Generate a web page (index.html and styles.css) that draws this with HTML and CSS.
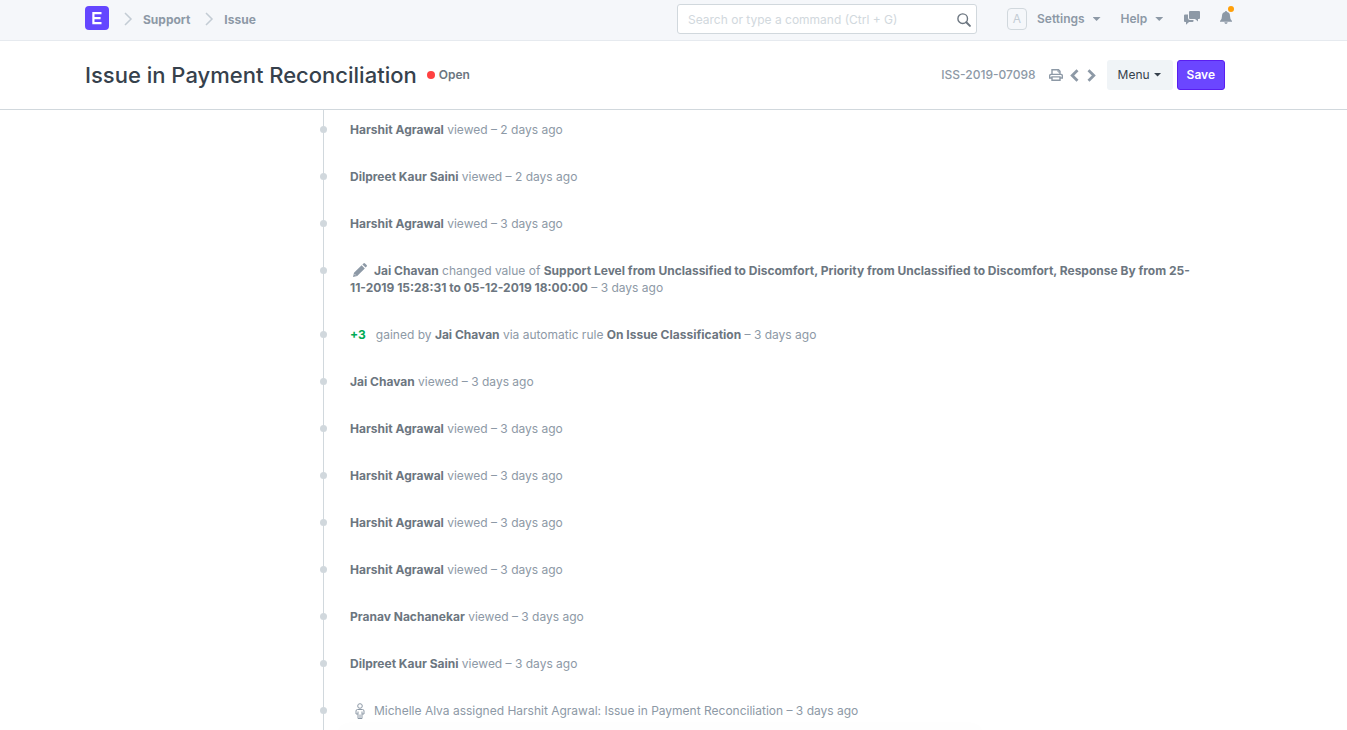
FILE: index.html
```html
<!DOCTYPE html>
<html lang="en">
<head>
<meta charset="utf-8">
<meta name="viewport" content="width=device-width, initial-scale=1">
<title>Issue in Payment Reconciliation</title>
<link rel="stylesheet" href="styles.css">
</head>
<body>
<header class="navbar">
  <div class="container navbar-inner">
    <nav class="breadcrumbs" aria-label="Breadcrumb">
      <a class="logo" href="#" aria-label="Home"><svg width="24" height="24" viewBox="0 0 24 24"><rect width="24" height="24" rx="4" fill="#6446ff"/><path d="M16.5 7.2H8.4v9.9h8.1M8.4 12.1h7.2" fill="none" stroke="#fff" stroke-width="2.2"/></svg></a>
      <svg class="crumb-arrow" width="10" height="14" viewBox="0 0 10 14"><path d="M2 1l6 6-6 6"/></svg>
      <a href="#">Support</a>
      <svg class="crumb-arrow" width="10" height="14" viewBox="0 0 10 14"><path d="M2 1l6 6-6 6"/></svg>
      <a href="#">Issue</a>
    </nav>
    <form class="search">
      <input type="text" aria-label="Search" placeholder="Search or type a command (Ctrl + G)">
      <svg class="search-icon" width="14" height="14" viewBox="0 0 14 14"><circle cx="5.7" cy="5.7" r="4.8" fill="none" stroke="#6c7680" stroke-width="1.4"/><path d="M9.3 9.3l3.6 3.6" stroke="#6c7680" stroke-width="2" stroke-linecap="round"/></svg>
    </form>
    <div class="nav-menu">
      <a class="avatar" href="#">A</a>
      <a class="nav-drop settings" href="#">Settings <span class="caret"></span></a>
      <a class="nav-drop help" href="#">Help <span class="caret"></span></a>
      <a class="chat" href="#" aria-label="Chat"><svg width="16" height="14" viewBox="0 0 16 14"><path d="M6 0h9q1 0 1 1v6q0 1-1 1h-1v2.5L11 8H6q-1 0-1-1V1q0-1 1-1z"/><path d="M1 3.5h3V7q0 2 2 2h3.5v1q0 1-1 1H5l-3 2.8V11H1q-1 0-1-1V4.500q0-1 1-1z"/></svg></a>
      <a class="bell" href="#" aria-label="Notifications"><svg width="12" height="13" viewBox="0 0 12 13"><path d="M6 0q1 0 1.100 1Q10 1.700 10 5q0 3.500 2 5v.8H0V10q2-1.500 2-5 0-3.300 2.900-4Q5 0 6 0zM4.300 11.300h3.400Q7.400 13 6 13t-1.700-1.700z"/></svg><span class="dot"></span></a>
    </div>
  </div>
</header>
<div class="page-head">
  <div class="container head-inner">
    <h1>Issue in Payment Reconciliation</h1>
    <span class="status">Open</span>
    <div class="actions">
      <span class="doc-id">ISS-2019-07098</span>
      <button class="icon-btn print" type="button" aria-label="Print"><svg width="14" height="12" viewBox="0 0 14 12"><path d="M3 6V.7h6.500L11 2.200V6M3 9H.7V6.500Q.7 5.400 1.800 5.400h10.400q1.100 0 1.100 1.100V9H11M3 7.900h8v3.400H3z" fill="none" stroke="#8d99a6" stroke-width="1.400"/><path d="M9 1v2h2" fill="none" stroke="#8d99a6"/></svg></button>
      <button class="icon-btn prev" type="button" aria-label="Previous"><svg width="9" height="13" viewBox="0 0 9 13"><path d="M7.500 1.200L2.200 6.500l5.300 5.300" fill="none" stroke="#8d99a6" stroke-width="2.800"/></svg></button>
      <button class="icon-btn next" type="button" aria-label="Next"><svg width="9" height="13" viewBox="0 0 9 13"><path d="M1.500 1.200l5.300 5.300-5.300 5.300" fill="none" stroke="#8d99a6" stroke-width="2.800"/></svg></button>
      <button class="btn menu-btn" type="button">Menu <span class="caret"></span></button>
      <button class="btn save-btn" type="button">Save</button>
    </div>
  </div>
</div>
<main class="container main">
  <ul class="timeline">
    <li><b>Harshit Agrawal</b> viewed – 2 days ago</li>
    <li><b>Dilpreet Kaur Saini</b> viewed – 2 days ago</li>
    <li><b>Harshit Agrawal</b> viewed – 3 days ago</li>
    <li><svg class="item-icon" width="20" height="14" viewBox="0 0 20 14"><path d="M3 14l1-4.200 7.600-7.600 3.200 3.200L7.200 13zM12.400 1.400l1-1q.8-.8 1.600 0l1.600 1.600q.8.8 0 1.600l-1 1z" fill="#8d99a6"/><path d="M4.600 11.200l1.200 1.200" stroke="#fff" stroke-width=".7"/></svg><b class="after-icon">Jai Chavan</b> changed value of <b>Support Level from Unclassified to Discomfort, Priority from Unclassified to Discomfort, Response By from 25-11-2019 15:28:31 to 05-12-2019 18:00:00</b> – 3 days ago</li>
    <li><b class="points">+3</b>gained by <b>Jai Chavan</b> via automatic rule <b>On Issue Classification</b> – 3 days ago</li>
    <li><b>Jai Chavan</b> viewed – 3 days ago</li>
    <li><b>Harshit Agrawal</b> viewed – 3 days ago</li>
    <li><b>Harshit Agrawal</b> viewed – 3 days ago</li>
    <li><b>Harshit Agrawal</b> viewed – 3 days ago</li>
    <li><b>Harshit Agrawal</b> viewed – 3 days ago</li>
    <li><b>Pranav Nachanekar</b> viewed – 3 days ago</li>
    <li><b>Dilpreet Kaur Saini</b> viewed – 3 days ago</li>
    <li><svg class="item-icon person" width="20" height="16" viewBox="0 0 20 16"><g fill="none" stroke="#8d99a6"><circle cx="10" cy="3" r="2.300"/><path d="M7.500 6.500h5q1.500 0 1.500 1.500v3h-2v4.500H8V11H6V8q0-1.500 1.500-1.500zM8 8.500V11M12 8.500V11M10 11.500v4"/></g></svg><span class="after-icon">Michelle Alva assigned Harshit Agrawal: Issue in Payment Reconciliation – 3 days ago</span></li>
  </ul>
</main>
<div class="bottom-shade"></div>
</body>
</html>
```
FILE: styles.css
```css
* { box-sizing: border-box; }
body {
  margin: 0;
  min-height: 100vh;
  display: flex;
  flex-direction: column;
  background: #fff;
  color: #8d99a6;
  font: 12px/17px Inter, "Liberation Sans", sans-serif;
}
a { color: inherit; text-decoration: none; }
svg { display: block; flex: none; }
button, input { font: inherit; }
.container {
  width: 100%;
  max-width: 1240px;
  padding: 0 15px 0 85px;
}
.container.head-inner { max-width: 1225px; padding-right: 0; }
.container.navbar-inner { padding-right: 10px; }

.navbar { background: #f5f7fa; border-bottom: 1px solid #e6eaef; }
.navbar-inner { display: flex; align-items: center; height: 40px; padding-bottom: 2px; }
.breadcrumbs { display: flex; align-items: center; font-weight: 700; }
.breadcrumbs .logo { margin-bottom: 2px; }
.crumb-arrow { margin: 0 10px 0 14px; fill: none; stroke: #c3ccd4; stroke-width: 1.5; }
.search { position: relative; width: 300px; margin-left: auto; }
.search input {
  display: block;
  width: 100%;
  height: 30px;
  padding: 0 30px 0 10px;
  border: 1px solid #d1d8dd;
  border-radius: 3px;
  background: #fff;
  color: #36414c;
}
.search input::placeholder { color: #d1d8dd; opacity: 1; }
.search-icon { position: absolute; right: 6px; top: 9px; }
.nav-menu { display: flex; flex: none; align-items: center; width: 223px; margin-left: 30px; line-height: 20px; font-weight: 600; }
.avatar {
  flex: none;
  width: 20px;
  height: 22px;
  border: 1px solid #d1d8dd;
  border-radius: 4px;
  color: #c3ccd4;
  font-weight: 400;
  text-align: center;
}
.nav-drop { display: flex; align-items: center; gap: 8px; }
.settings { margin-left: 10px; }
.help { margin-left: 20px; }
.caret { width: 8px; height: 4px; background: currentColor; clip-path: polygon(0 0, 100% 0, 50% 100%); }
.chat { margin: 0 0 2px 21px; }
.bell { position: relative; margin: 0 0 4px 20px; }
.chat svg, .bell svg { fill: #8d99a6; }
.dot { position: absolute; top: -5px; right: -2px; width: 6px; height: 6px; border-radius: 50%; background: #ffa00a; }

.page-head { border-bottom: 1px solid #d1d8dd; line-height: 16px; }
.head-inner { display: flex; align-items: center; height: 68px; }
h1 { margin: 0; color: #36414c; font-size: 22px; line-height: 30px; font-weight: 500; white-space: nowrap; }
.status { display: flex; align-items: center; gap: 4px; margin-left: 10px; padding-bottom: 1px; color: #6c7680; font-weight: 600; }
.status::before { content: ""; width: 8px; height: 8px; border-radius: 50%; background: #ff4141; }
.actions { display: flex; align-items: center; margin-left: auto; }
.doc-id { font-weight: 500; }
.icon-btn { padding: 0; border: 0; background: none; }
.print { margin-left: 13px; }
.prev { margin-left: 7px; }
.next { margin-left: 8px; }
.btn { display: flex; align-items: center; height: 30px; padding: 0 10px 1px; border: 1px solid transparent; border-radius: 3px; }
.menu-btn { gap: 4px; margin-left: 11px; background: #f0f4f7; color: #36414c; }
.save-btn { margin-left: 4px; padding: 0 9px 1px; border-color: #5a1ef0; background: #6b46ff; color: #fff; font-weight: 600; }

.main { display: flex; flex: 1; padding-left: 323px; }
.timeline {
  flex: 1;
  display: flex;
  flex-direction: column;
  gap: 30px;
  margin: 0;
  padding: 11px 20px 10px 26px;
  border-left: 1px solid #d1d8dd;
  list-style: none;
}
.timeline li { position: relative; }
.timeline li::before {
  content: "";
  position: absolute;
  left: -30px;
  top: 5px;
  width: 7px;
  height: 7px;
  border-radius: 50%;
  background: #d1d8dd;
}
.timeline b { color: #6c7680; font-weight: 700; }
.item-icon { display: inline-block; vertical-align: -2px; }
.person { margin: -1px 0; vertical-align: -3px; }
.after-icon { margin-left: 4px; }
.timeline .points { margin-right: 10px; color: #00ab55; }
.bottom-shade {
  position: fixed;
  bottom: -4px;
  left: 25%;
  right: 27%;
  height: 4px;
  box-shadow: 0 0 18px rgba(0, 0, 0, 0.04);
}
```
